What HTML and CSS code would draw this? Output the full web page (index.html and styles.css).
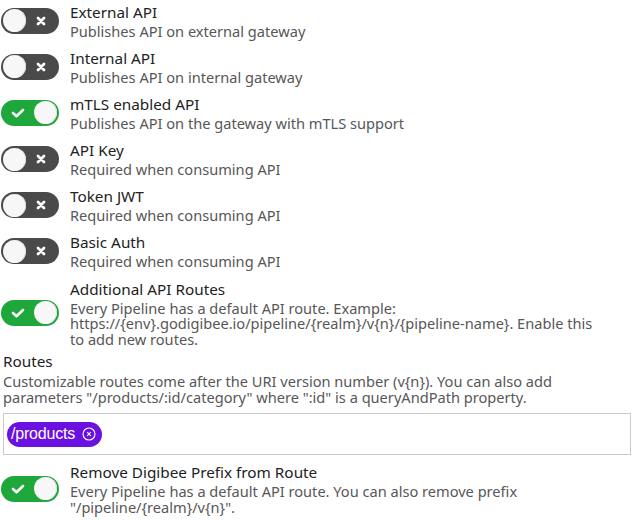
FILE: index.html
```html
<!DOCTYPE html>
<html>
<head>
<meta charset="utf-8">
<link rel="stylesheet" href="styles.css">
</head>
<body>
<div class="page">
  <div class="row">
    <span class="toggle off"><span class="knob"></span><svg class="ico" viewBox="0 0 10 10"><path d="M2 2L8 8M8 2L2 8"/></svg></span>
    <div class="text"><div class="title">External API</div><div class="desc">Publishes API on external gateway</div></div>
  </div>
  <div class="row">
    <span class="toggle off"><span class="knob"></span><svg class="ico" viewBox="0 0 10 10"><path d="M2 2L8 8M8 2L2 8"/></svg></span>
    <div class="text"><div class="title">Internal API</div><div class="desc">Publishes API on internal gateway</div></div>
  </div>
  <div class="row">
    <span class="toggle on"><svg class="ico" viewBox="0 0 14 10"><path d="M2 5L5.5 8.2L12 2"/></svg><span class="knob"></span></span>
    <div class="text"><div class="title">mTLS enabled API</div><div class="desc">Publishes API on the gateway with mTLS support</div></div>
  </div>
  <div class="row">
    <span class="toggle off"><span class="knob"></span><svg class="ico" viewBox="0 0 10 10"><path d="M2 2L8 8M8 2L2 8"/></svg></span>
    <div class="text"><div class="title">API Key</div><div class="desc">Required when consuming API</div></div>
  </div>
  <div class="row">
    <span class="toggle off"><span class="knob"></span><svg class="ico" viewBox="0 0 10 10"><path d="M2 2L8 8M8 2L2 8"/></svg></span>
    <div class="text"><div class="title">Token JWT</div><div class="desc">Required when consuming API</div></div>
  </div>
  <div class="row">
    <span class="toggle off"><span class="knob"></span><svg class="ico" viewBox="0 0 10 10"><path d="M2 2L8 8M8 2L2 8"/></svg></span>
    <div class="text"><div class="title">Basic Auth</div><div class="desc">Required when consuming API</div></div>
  </div>
  <div class="row">
    <span class="toggle on"><svg class="ico" viewBox="0 0 14 10"><path d="M2 5L5.5 8.2L12 2"/></svg><span class="knob"></span></span>
    <div class="text"><div class="title">Additional API Routes</div><div class="desc">Every Pipeline has a default API route. Example: https://{env}.godigibee.io/pipeline/{realm}/v{n}/{pipeline-name}. Enable this to add new routes.</div></div>
  </div>
  <div class="routes">
    <div class="title">Routes</div>
    <div class="desc">Customizable routes come after the URI version number (v{n}). You can also add parameters "/products/:id/category" where ":id" is a queryAndPath property.</div>
    <div class="box">
      <span class="chip">/products <svg class="chip-x" viewBox="0 0 14 14"><circle cx="7" cy="7" r="6"/><path d="M5.2 5.2L8.8 8.8M8.8 5.2L5.2 8.8"/></svg></span>
    </div>
  </div>
  <div class="row">
    <span class="toggle on"><svg class="ico" viewBox="0 0 14 10"><path d="M2 5L5.5 8.2L12 2"/></svg><span class="knob"></span></span>
    <div class="text"><div class="title">Remove Digibee Prefix from Route</div><div class="desc">Every Pipeline has a default API route. You can also remove prefix "/pipeline/{realm}/v{n}".</div></div>
  </div>
</div>
</body>
</html>
```
FILE: styles.css
```css
html, body {
  margin: 0;
  padding: 0;
  background: #fff;
}
body {
  font-family: "Noto Sans", "Open Sans", sans-serif;
  color: #222;
}
.page {
  padding: 2px 7px 0 1px;
  display: flex;
  flex-direction: column;
}
.row {
  display: flex;
  align-items: center;
  gap: 11px;
  padding-bottom: 8.6px;
}
.text {
  flex: 1;
  max-width: 535px;
}
.title {
  font-size: 15.3px;
  line-height: 21px;
  color: #222;
}
.desc {
  font-size: 14.6px;
  line-height: 15.5px;
  color: #575757;
  margin-top: 1px;
}
.toggle {
  flex: none;
  width: 58px;
  height: 26px;
  border-radius: 13px;
  box-sizing: border-box;
  padding: 2px 2px;
  display: flex;
  align-items: center;
  justify-content: space-between;
}
.toggle.off {
  background: #4a4a4a;
  padding-right: 13px;
}
.toggle.on {
  background: #1ea83b;
  padding-left: 10px;
}
.knob {
  width: 23px;
  height: 23px;
  border-radius: 50%;
  background: #f7f7f7;
  box-shadow: inset -1px 0 0 #ddd;
}
.ico {
  fill: none;
  stroke: #fff;
  stroke-linecap: round;
  stroke-linejoin: round;
}
.toggle.off .ico {
  width: 10px;
  height: 10px;
  stroke-width: 2.8;
}
.toggle.on .ico {
  width: 14px;
  height: 10px;
  stroke-width: 2.6;
}
.routes {
  display: flex;
  flex-direction: column;
  padding-left: 2px;
  margin-top: -4.6px;
}
.routes .desc {
  margin-top: 2px;
}
.box {
  margin-top: 8px;
  height: 42px;
  box-sizing: border-box;
  border: 1px solid #c9cbcb;
  padding: 0 3px;
  width: 628px;
  display: flex;
  align-items: center;
  margin-bottom: 7px;
}
.chip {
  display: inline-flex;
  align-items: center;
  gap: 7px;
  height: 25px;
  box-sizing: border-box;
  padding: 0 6px 0 4px;
  border-radius: 13px;
  background: #6a10e0;
  color: #fff;
  font-family: "Liberation Sans", Arial, sans-serif;
  font-size: 16px;
  letter-spacing: -0.2px;
}
.chip-x {
  width: 14px;
  height: 14px;
  fill: none;
  stroke: #fff;
  stroke-width: 1.1;
}
```
